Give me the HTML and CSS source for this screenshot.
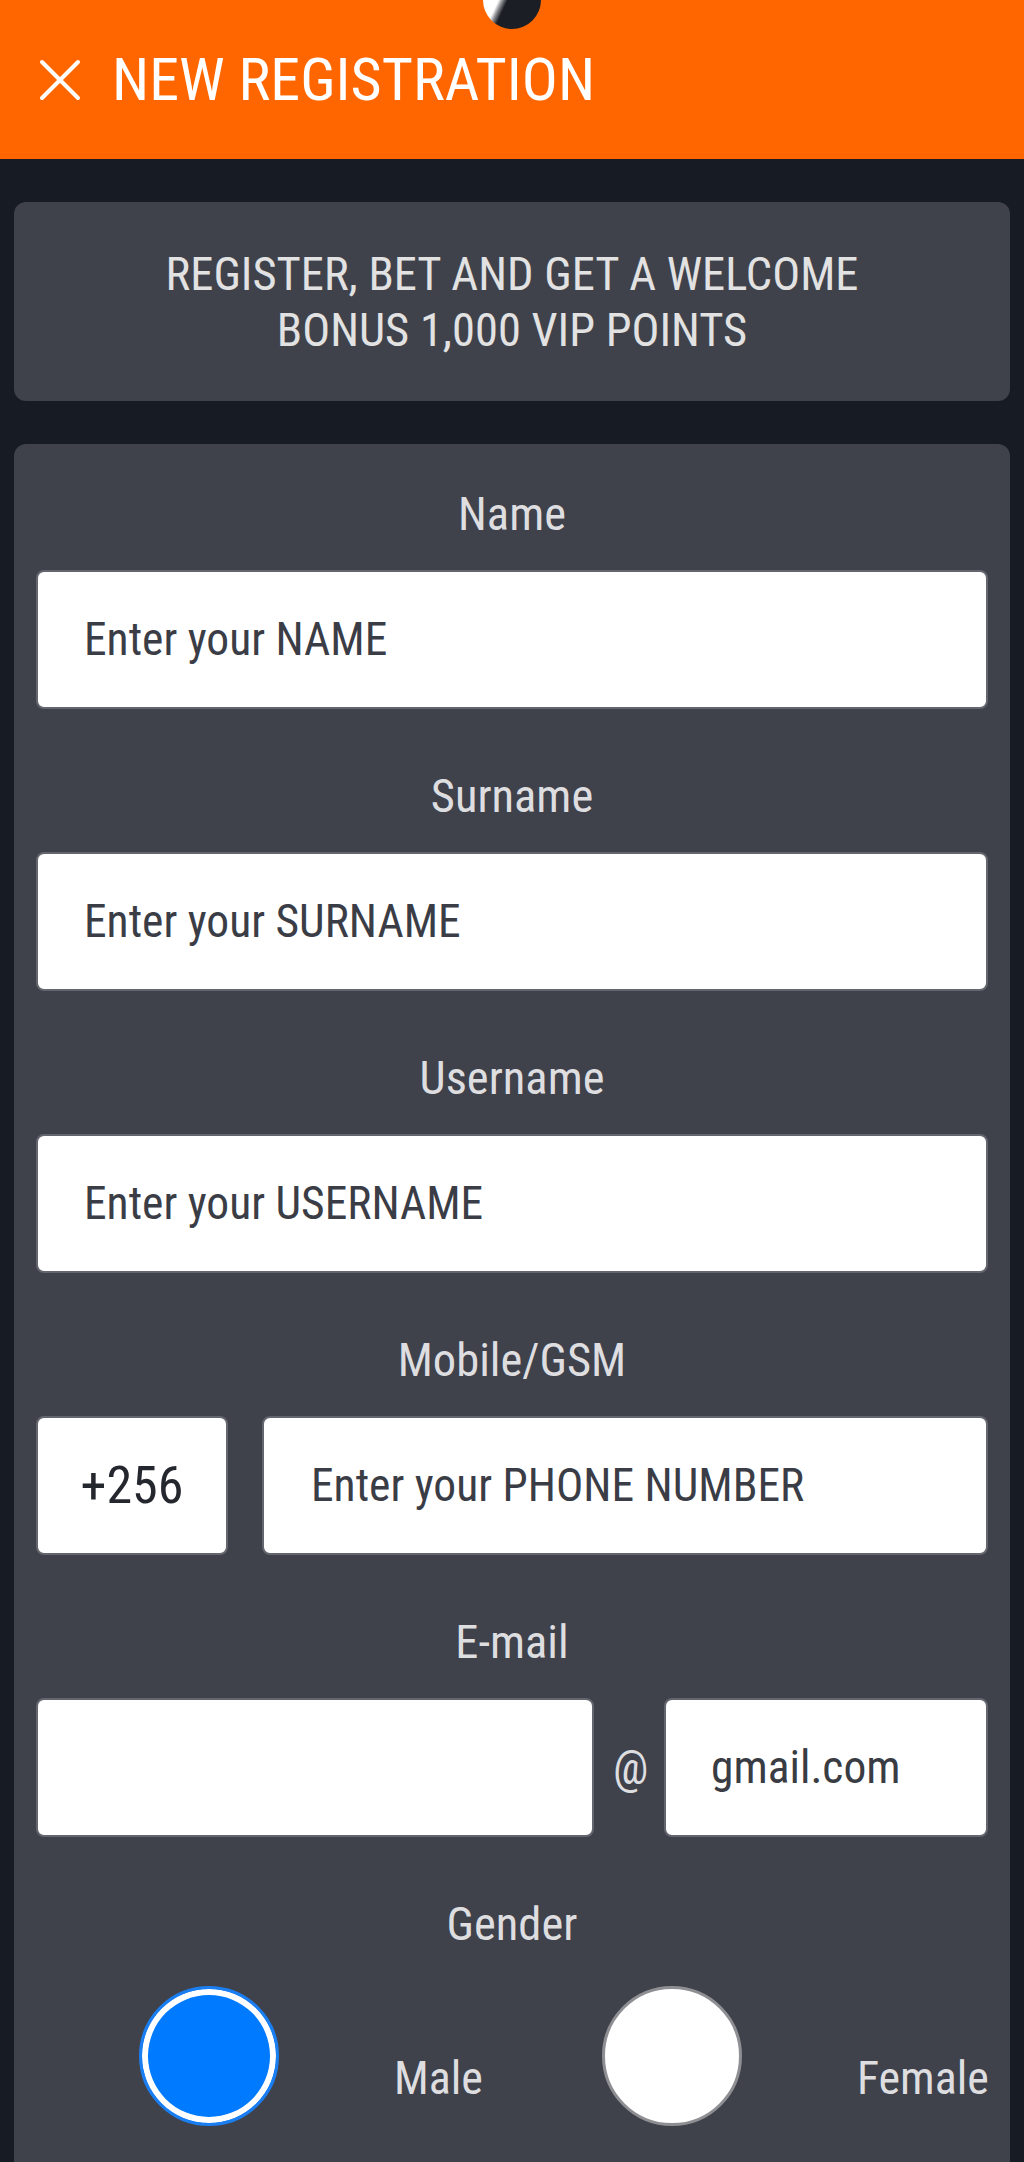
FILE: index.html
```html
<!DOCTYPE html>
<html lang="en">
<head>
    <meta charset="UTF-8">
    <meta name="viewport" content="width=device-width, initial-scale=1.0">
    <title>New Registration</title>
    <link rel="stylesheet" href="styles.css">
</head>
<body>

    <header class="topbar">
        <span class="pull-dot"></span>
        <svg class="close-icon" viewBox="0 0 42 42" aria-hidden="true">
            <path d="M3 3 L39 39 M39 3 L3 39" />
        </svg>
        <h1 class="topbar-title">NEW REGISTRATION</h1>
    </header>

    <main class="page">
        <div class="promo">
            REGISTER, BET AND GET A WELCOME<br>
            BONUS 1,000 VIP POINTS
        </div>

        <form class="reg-form" id="registerForm">

            <div class="field">
                <label for="Name">Name</label>
                <input type="text" id="Name" name="Name" placeholder="Enter your NAME">
            </div>

            <div class="field">
                <label for="Surname">Surname</label>
                <input type="text" id="Surname" name="Surname" placeholder="Enter your SURNAME">
            </div>

            <div class="field">
                <label for="Username">Username</label>
                <input type="text" id="Username" name="Username" placeholder="Enter your USERNAME">
            </div>

            <div class="field">
                <label for="Phone">Mobile/GSM</label>
                <div class="row">
                    <div class="prefix">+256</div>
                    <input type="tel" id="Phone" name="Phone" class="phone" placeholder="Enter your PHONE NUMBER">
                </div>
            </div>

            <div class="field">
                <label for="Email">E-mail</label>
                <div class="row row-mail">
                    <input type="text" id="Email" name="Email" class="mail-user">
                    <span class="at">@</span>
                    <input type="text" name="Domain" class="mail-domain" value="gmail.com">
                </div>
            </div>

            <div class="field field-last">
                <label>Gender</label>
                <div class="gender-row">
                    <div class="gender-option">
                        <span class="radio checked"></span>
                        <span class="gender-label">Male</span>
                    </div>
                    <div class="gender-option">
                        <span class="radio"></span>
                        <span class="gender-label">Female</span>
                    </div>
                </div>
            </div>

        </form>
    </main>

</body>
</html>
```

FILE: styles.css
```css
body {
    margin: 0;
    background: #171b23;
    color: #dedee0;
    font-family: "Roboto Condensed", Roboto, sans-serif;
    font-stretch: condensed;
    font-weight: 400;
}

.topbar {
    position: relative;
    display: flex;
    align-items: center;
    gap: 31px;
    height: 159px;
    padding-left: 39px;
    background: #ff6600;
    overflow: hidden;
}

/* little pull-to-refresh ball peeking from the top */
.pull-dot {
    position: absolute;
    top: -29px;
    left: 483px;
    width: 58px;
    height: 58px;
    border-radius: 50%;
    background: linear-gradient(115deg, #fff 34%, #8a8c90 39%, #1b1e25 45%);
}

.close-icon {
    width: 42px;
    height: 42px;
    flex-shrink: 0;
}

.close-icon path {
    stroke: #fff;
    stroke-width: 4;
    stroke-linecap: round;
    fill: none;
}

.topbar-title {
    margin: 0;
    font-size: 60px;
    font-weight: 400;
    line-height: 70px;
    color: #fff;
}

.page {
    padding: 0 14px;
}

.promo {
    margin-top: 43px;
    padding: 44px 20px 43px;
    background: #3f424b;
    border-radius: 12px;
    font-size: 46.5px;
    line-height: 56px;
    text-align: center;
    color: #e2e2e3;
}

.reg-form {
    margin-top: 43px;
    padding: 42px 22px 36px;
    background: #3f424b;
    border-radius: 12px 12px 0 0;
}

.field {
    margin-bottom: 59px;
}

.field-last {
    margin-bottom: 0;
}

.field > label {
    display: block;
    margin-bottom: 28px;
    font-size: 46.5px;
    line-height: 56px;
    text-align: center;
    color: #dedee0;
}

input {
    display: block;
    box-sizing: border-box;
    width: 100%;
    min-width: 0;
    height: 139px;
    padding: 0 46px;
    border: 2px solid #63666e;
    border-radius: 8px;
    background: #fff;
    font-family: "Roboto Condensed", Roboto, sans-serif;
    font-stretch: condensed;
    font-size: 45.5px;
    color: #3a3c44;
    outline: none;
}

input::placeholder {
    color: #3b3d46;
}

.row {
    display: flex;
    align-items: center;
    gap: 34px;
}

.prefix {
    display: flex;
    align-items: center;
    justify-content: center;
    box-sizing: border-box;
    width: 192px;
    height: 139px;
    flex-shrink: 0;
    border: 2px solid #63666e;
    border-radius: 8px;
    background: #fff;
    font-size: 52px;
    color: #25272e;
}

.phone {
    flex: 1;
    width: 0;
    padding-left: 47px;
}

.row-mail {
    gap: 19px;
}

.mail-user {
    width: 558px;
    flex-shrink: 0;
}

.at {
    width: 32px;
    font-size: 46px;
    text-align: center;
    color: #dedee0;
}

.mail-domain {
    flex: 1;
    width: 0;
    padding-left: 45px;
}

.gender-row {
    display: flex;
    align-items: center;
    gap: 119px;
    padding: 6px 0 0 103px;
}

.gender-option {
    display: flex;
    align-items: center;
    gap: 115px;
}

.radio {
    box-sizing: border-box;
    width: 140px;
    height: 140px;
    border-radius: 50%;
    border: 3px solid #8e8e93;
    background: #fff;
}

.radio.checked {
    border-color: #1a7ef0;
    background: #007aff;
    box-shadow: inset 0 0 0 6px #fff;
}

.gender-label {
    margin-top: 44px;
    font-size: 46px;
    line-height: 56px;
    color: #dedee0;
}
```
